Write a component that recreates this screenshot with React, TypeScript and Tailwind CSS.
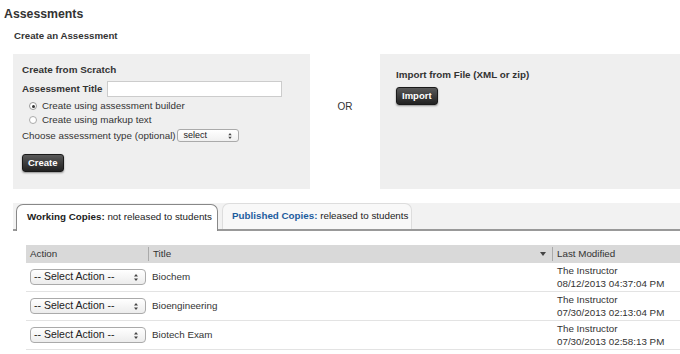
const rows = [
  { title: "Biochem", date: "08/12/2013 04:37:04 PM" },
  { title: "Bioengineering", date: "07/30/2013 02:13:04 PM" },
  { title: "Biotech Exam", date: "07/30/2013 02:58:13 PM" },
];

const UpDown = ({ size = 7 }: { size?: number }) => (
  <svg width={4} height={size} viewBox="0 0 4 7" className="shrink-0">
    <path d="M2 0 L4 2.5 L0 2.5 Z M2 7 L4 4.5 L0 4.5 Z" fill="#444" />
  </svg>
);

const DarkButton = ({ label }: { label: string }) => (
  <button className="h-[18px] rounded-[3px] border border-[#1a1a1a] bg-gradient-to-b from-[#5a5a5a] to-[#222] px-[5px] text-[9.5px] font-bold leading-none text-white shadow-[0_1px_2px_rgba(0,0,0,0.4)]">
    {label}
  </button>
);

const ActionSelect = () => (
  <div className="flex h-[16px] w-[116px] items-center justify-between rounded-[4px] border border-[#aaa] bg-gradient-to-b from-white to-[#ececec] pl-[3px] pr-[7px] text-[10.5px] text-[#222]">
    <span>-- Select Action --</span>
    <UpDown />
  </div>
);

export default function App() {
  return (
    <div className="h-[354px] w-[680px] overflow-hidden bg-white text-[9.8px] text-[#333] [font-family:'Liberation_Sans',Arial,sans-serif]">
      <h1 className="pl-[4px] pt-[7px] text-[12.3px] font-bold leading-[14px] text-[#333]">
        Assessments
      </h1>
      <h2 className="mt-[9px] pl-[14px] text-[9.7px] font-bold leading-[12px] text-[#333]">
        Create an Assessment
      </h2>

      <div className="mt-[12px] flex h-[135px] pl-[13px]">
        {/* Create from scratch */}
        <div className="w-[297px] bg-[#efefef] pl-[9px] pt-[10px]">
          <div className="text-[9.9px] font-bold leading-[12px]">Create from Scratch</div>
          <div className="mt-[5px] flex items-center gap-[5px]">
            <span className="text-[9.8px] font-bold">Assessment Title</span>
            <div className="h-[16px] w-[175px] border border-[#ccc] bg-white" />
          </div>
          <div className="mt-[2px] flex items-center gap-[5px] pl-[7px] leading-[14px]">
            <span className="flex h-[8px] w-[8px] items-center justify-center rounded-full border border-[#999] bg-white">
              <span className="h-[3px] w-[3px] rounded-full bg-[#333]" />
            </span>
            <span>Create using assessment builder</span>
          </div>
          <div className="flex items-center gap-[5px] pl-[7px] leading-[14px]">
            <span className="h-[8px] w-[8px] rounded-full border border-[#aaa] bg-white" />
            <span>Create using markup text</span>
          </div>
          <div className="mt-[1px] flex items-center gap-[1px] leading-[15px]">
            <span>Choose assessment type (optional)</span>
            <div className="flex h-[13px] w-[62px] items-center justify-between rounded-[3px] border border-[#aaa] bg-gradient-to-b from-white to-[#f0f0f0] pl-[6px] pr-[6px] text-[9px] leading-none text-[#222]">
              <span>select</span>
              <UpDown size={6} />
            </div>
          </div>
          <div className="mt-[11px]">
            <DarkButton label="Create" />
          </div>
        </div>

        <div className="flex w-[70px] justify-center pt-[47px] text-[10px] leading-[12px] text-[#333]">OR</div>

        {/* Import */}
        <div className="flex-1 bg-[#efefef] pl-[16px] pt-[15px]">
          <div className="text-[9.8px] font-bold leading-[12px]">Import from File (XML or zip)</div>
          <div className="mt-[6px]">
            <DarkButton label="Import" />
          </div>
        </div>
      </div>

      {/* Tabs */}
      <div className="ml-[13px] mt-[14px] flex h-[28px] items-end gap-[4px] border-b-2 border-[#999] bg-[#f2f2f2] pl-[3px]">
        <div className="-mb-[2px] flex h-[27px] w-[202px] items-center rounded-t-[7px] border border-b-0 border-[#888] bg-white pb-[2px] pl-[10px] text-[#222]">
          <span className="font-bold">Working Copies:</span>&nbsp;not released to students
        </div>
        <div className="flex h-[26px] w-[190px] items-center rounded-t-[7px] border border-b-0 border-[#ddd] bg-[#f8f8f8] pl-[9px] text-[#222]">
          <span className="font-bold text-[#1d5c9e]">Published Copies:</span>&nbsp;released to students
        </div>
      </div>

      {/* Table */}
      <div className="ml-[26px] mt-[14px]">
        <div className="flex h-[18px] items-center bg-[#d9d9d9] text-[#333]">
          <div className="w-[123px] border-r border-[#aaa] pl-[4px]">Action</div>
          <div className="flex w-[404px] items-center justify-between border-r border-[#aaa] pl-[4px] pr-[6px]">
            <span>Title</span>
            <svg width={6} height={4} viewBox="0 0 6 4">
              <path d="M0 0 L6 0 L3 4 Z" fill="#444" />
            </svg>
          </div>
          <div className="flex-1 pl-[4px]">Last Modified</div>
        </div>
        {rows.map((r) => (
          <div key={r.title} className="flex h-[29px] items-center border-b border-[#e3e3e3]">
            <div className="w-[123px] pl-[4px]">
              <ActionSelect />
            </div>
            <div className="w-[404px] pl-[3px]">{r.title}</div>
            <div className="flex-1 pl-[4px] leading-[13px]">
              <div>The Instructor</div>
              <div>{r.date}</div>
            </div>
          </div>
        ))}
      </div>
    </div>
  );
}
